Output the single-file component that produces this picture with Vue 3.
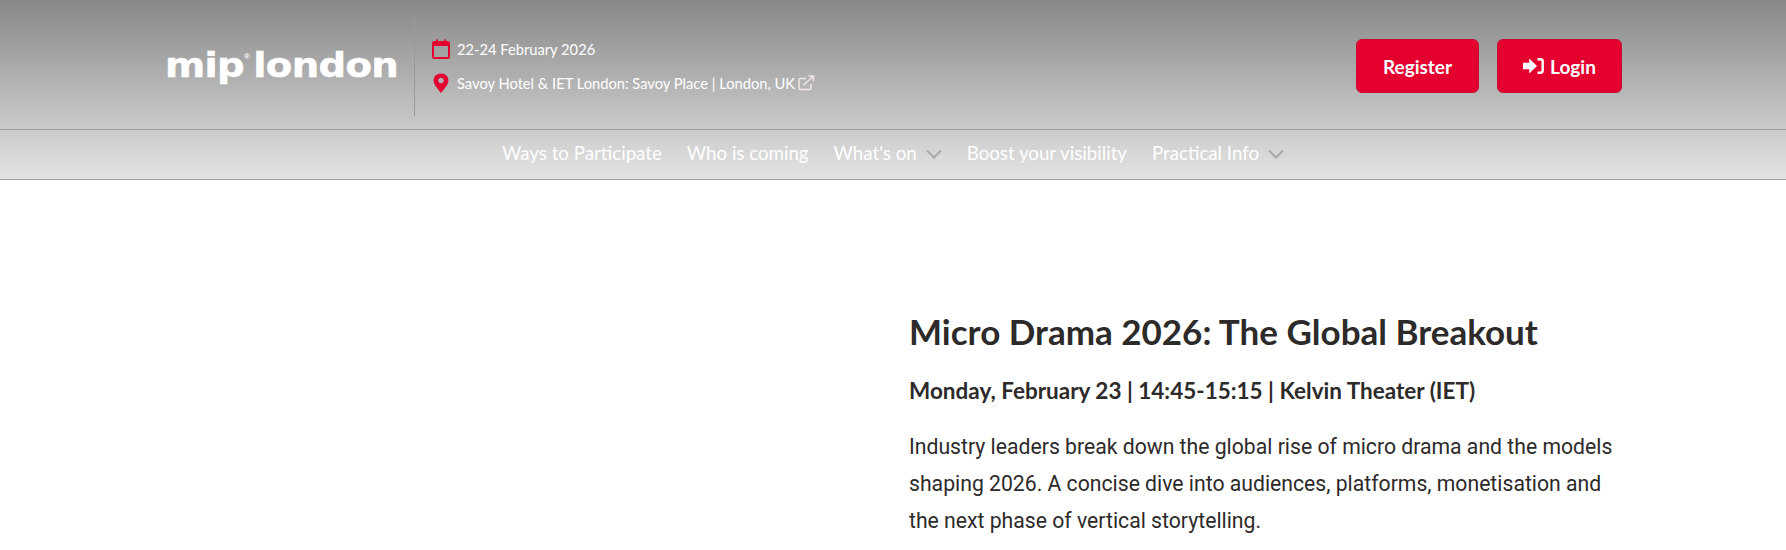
<script setup>
const navItems = [
  { label: 'Ways to Participate', caret: false },
  { label: 'Who is coming', caret: false },
  { label: "What's on", caret: true },
  { label: 'Boost your visibility', caret: false },
  { label: 'Practical Info', caret: true }
]
</script>

<template>
  <div class="page">
    <header class="top">
      <div class="brand">
        <div class="logo">mip<sup class="reg">®</sup><span class="logo-b">london</span></div>
      </div>
      <div class="info">
        <div class="info-row">
          <svg class="ico" width="18" height="20" viewBox="0 0 18 20">
            <rect x="1" y="3" width="16" height="16" rx="1.5" fill="none" stroke="#e4002f" stroke-width="2" />
            <rect x="1" y="3" width="16" height="4" fill="#e4002f" />
            <rect x="4" y="0.5" width="2" height="4" fill="#e4002f" />
            <rect x="12" y="0.5" width="2" height="4" fill="#e4002f" />
          </svg>
          <span>22-24 February 2026</span>
        </div>
        <div class="info-row">
          <svg class="ico" width="18" height="20" viewBox="0 0 18 20">
            <path fill-rule="evenodd" fill="#e4002f" d="M9 0.5C4.6 0.5 1.6 3.6 1.6 7.4 1.6 11.8 7 17 9 20 11 17 16.4 11.8 16.4 7.400 16.400 3.600 13.400 0.500 9 0.500ZM9 4.800A2.700 2.700 0 1 1 9 10.200 2.700 2.700 0 1 1 9 4.800Z" />
          </svg>
          <span>Savoy Hotel &amp; IET London: Savoy Place | London, UK</span>
          <svg class="ext" width="17" height="16" viewBox="0 0 17 16">
            <path fill="none" stroke="#f3e6e6" stroke-width="1.5" d="M13 9V13A1.500 1.500 0 0 1 11.500 14.500H2.500A1.500 1.500 0 0 1 1 13V5A1.500 1.500 0 0 1 2.500 3.500H8" />
            <path fill="none" stroke="#f3e6e6" stroke-width="1.600" d="M5.500 10L15 1.500M10.500 1H15.500V6" />
          </svg>
        </div>
      </div>
      <div class="actions">
        <a class="btn btn-register">Register</a>
        <a class="btn btn-login">
          <svg width="21" height="16" viewBox="0 0 21 16">
            <path fill="#fff" d="M0 4.800H6.200V0.600L14 8 6.200 15.400V11.200H0Z" />
            <path fill="none" stroke="#fff" stroke-width="2.400" d="M14.500 1.200H17.500A2.200 2.200 0 0 1 19.700 3.400V12.600A2.200 2.200 0 0 1 17.500 14.800H14.500" />
          </svg>
          <span>Login</span>
        </a>
      </div>
    </header>
    <nav class="nav">
      <a v-for="item in navItems" :key="item.label" class="nav-item">
        <span>{{ item.label }}</span>
        <svg v-if="item.caret" class="caret" width="16" height="10" viewBox="0 0 16 10">
          <path d="M1 1.500L8 8.500 15 1.500" fill="none" stroke="#a8a8a8" stroke-width="2" />
        </svg>
      </a>
    </nav>
    <main class="content">
      <div class="text">
        <h1>Micro Drama 2026: The Global Breakout</h1>
        <h2>Monday, February 23 | 14:45-15:15 | Kelvin Theater (IET)</h2>
        <p>Industry leaders break down the global rise of micro drama and the models shaping 2026. A concise dive into audiences, platforms, monetisation and the next phase of vertical storytelling.</p>
      </div>
    </main>
  </div>
</template>

<style>
html, body { margin: 0; background: #fff; }
</style>

<style scoped>
.page { width: 1786px; height: 550px; overflow: hidden; font-family: Lato, sans-serif; background: #fff; }
.top {
  height: 129px;
  box-sizing: border-box;
  display: flex;
  align-items: center;
  padding: 0 164px 0 165px;
  background: linear-gradient(#888888, #cacaca);
}
.brand {
  width: 249px;
  height: 100px;
  margin-top: 3px;
  border-right: 1px solid #9a9a9a;
  display: flex;
  align-items: center;
  box-sizing: content-box;
}
.logo {
  font-family: "DejaVu Sans", sans-serif;
  font-weight: 700;
  font-size: 34px;
  line-height: 1;
  color: #fff;
  letter-spacing: -0.6px;
  white-space: nowrap;
  margin-bottom: 2px;
  transform: scaleX(1.135);
  transform-origin: left center;
  -webkit-text-stroke: 0.5px #fff;
}
.reg { font-size: 7px; letter-spacing: 0; vertical-align: 18px; line-height: 0; font-family: "Liberation Sans", sans-serif; -webkit-text-stroke: 0; }
.logo-b { margin-left: 3px; }
.info { margin-left: 17px; margin-top: 3px; display: flex; flex-direction: column; gap: 10px; color: #fff; font-size: 14.7px; flex: 1; }
.info-row { display: flex; align-items: center; height: 24px; }
.ico { margin-right: 7px; flex: none; }
.ext { margin-left: 3px; }
.actions { display: flex; gap: 18px; margin-top: 3px; }
.btn {
  height: 54px;
  box-sizing: border-box;
  border: 1px solid #c50d33;
  border-radius: 6px;
  background: #e4002f;
  color: #fff;
  font-weight: 700;
  font-size: 19px;
  display: flex;
  align-items: center;
  justify-content: center;
  gap: 6px;
}
.btn-register { width: 123px; }
.btn-login { width: 125px; }
.nav {
  height: 51px;
  box-sizing: border-box;
  padding-bottom: 4px;
  border-top: 1px solid #9e9e9e;
  border-bottom: 1px solid #9e9e9e;
  background: linear-gradient(#cbcbcb, #e4e4e4);
  display: flex;
  justify-content: center;
  align-items: center;
  gap: 25px;
  color: #fff;
  font-size: 18.7px;
}
.nav-item { display: flex; align-items: center; gap: 9px; }
.caret { margin-top: 3px; }
.content { padding: 127px 164px 0 909px; color: #2b2b2b; }
.text { width: 713px; }
h1 { margin: 0; font-size: 35px; font-weight: 700; line-height: 48px; color: #2d2a2a; }
h2 { margin: 20px 0 0; font-size: 22.5px; font-weight: 700; line-height: 32px; color: #2d2a2a; }
p { margin: 21px 0 0; font-family: Roboto, sans-serif; font-size: 21.2px; line-height: 37px; color: #2d2a2a; }
</style>
